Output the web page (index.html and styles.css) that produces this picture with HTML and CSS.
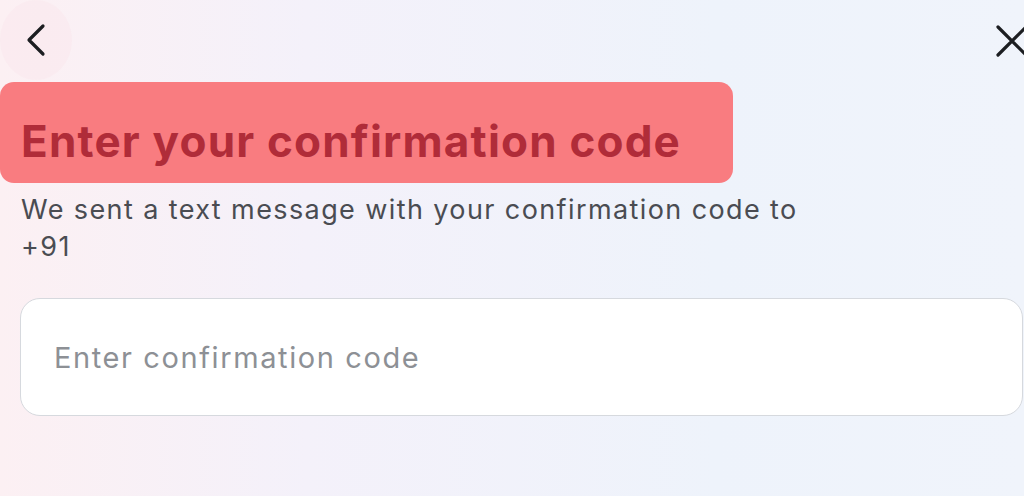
FILE: index.html
```html
<!DOCTYPE html>
<html lang="en">
<head>
<meta charset="utf-8">
<title>Enter your confirmation code</title>
<link rel="stylesheet" href="styles.css">
</head>
<body>
<div class="page">
  <div class="topbar">
    <button class="icon-btn back" aria-label="Back">
      <svg width="24" height="34" viewBox="0 0 24 34"><path d="M19 3 L5 17 L19 31" fill="none" stroke="#1c1e21" stroke-width="3.2" stroke-linecap="round" stroke-linejoin="round"/></svg>
    </button>
    <button class="icon-btn close" aria-label="Close">
      <svg width="36" height="36" viewBox="0 0 36 36"><path d="M4 4 L32 32 M32 4 L4 32" fill="none" stroke="#1c1e21" stroke-width="3.2" stroke-linecap="round"/></svg>
    </button>
  </div>
  <div class="title-box">
    <h1 class="title">Enter your confirmation code</h1>
  </div>
  <p class="subtitle">We sent a text message with your confirmation code to<br>+91</p>
  <div class="field">
    <span class="placeholder">Enter confirmation code</span>
  </div>
</div>
</body>
</html>
```

FILE: styles.css
```css
html, body {
  margin: 0;
  padding: 0;
}
body {
  width: 1024px;
  height: 496px;
  overflow: hidden;
  font-family: Inter, "Open Sans", sans-serif;
  background: linear-gradient(90deg, #fcf0f3 0%, #f4f1fa 30%, #eef3fb 70%, #f0f4fb 100%);
}
.page {
  display: flex;
  flex-direction: column;
}
.topbar {
  height: 82px;
  display: flex;
  justify-content: space-between;
  align-items: flex-start;
}
.icon-btn {
  border: none;
  padding: 0;
  background: transparent;
  display: flex;
  align-items: center;
  justify-content: center;
}
.back {
  width: 72px;
  height: 80px;
  border-radius: 50%;
  background: rgba(250, 232, 236, 0.55);
  justify-content: flex-start;
  padding-left: 24px;
}
.close {
  width: 40px;
  height: 82px;
  justify-content: flex-end;
  margin-right: -6px;
}
.title-box {
  width: 733px;
  height: 101px;
  box-sizing: border-box;
  background: #f97c80;
  border-radius: 14px;
  display: flex;
  align-items: center;
  padding-left: 21px;
  padding-top: 16px;
}
.title {
  margin: 0;
  font-size: 44px;
  font-weight: 700;
  letter-spacing: 1.2px;
  color: #b02c39;
}
.subtitle {
  margin: 8px 0 0 21px;
  font-size: 27px;
  line-height: 37px;
  letter-spacing: 1.4px;
  color: #4a4c52;
}
.field {
  margin: 33px 1px 0 20px;
  height: 118px;
  box-sizing: border-box;
  background: #fff;
  border: 1.5px solid #d6d9de;
  border-radius: 20px;
  display: flex;
  align-items: center;
  padding-left: 33px;
}
.placeholder {
  font-size: 29px;
  letter-spacing: 1.6px;
  color: #8d9095;
}
```
